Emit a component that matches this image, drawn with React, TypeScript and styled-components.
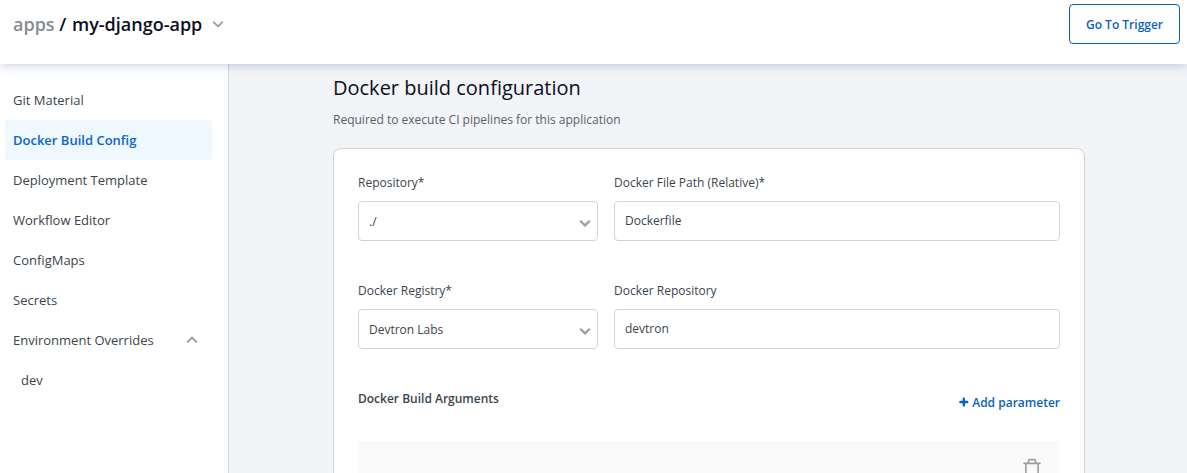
import React from 'react';
import styled, { createGlobalStyle, css } from 'styled-components';

const GlobalStyle = createGlobalStyle`
  *, *::before, *::after { box-sizing: border-box; }
  body {
    margin: 0;
    background: #fff;
    color: #3b444c;
    font-family: "Open Sans", sans-serif;
    font-size: 12px;
    overflow: hidden;
  }
  button, input { font-family: inherit; }
`;

const Page = styled.div`
  height: 100vh;
  display: flex;
  flex-direction: column;
  overflow: hidden;
`;

const Header = styled.header`
  position: relative;
  z-index: 1;
  flex: none;
  height: 64px;
  display: flex;
  justify-content: space-between;
  align-items: flex-start;
  padding: 4px 7px 0 13px;
  background: #fff;
  box-shadow: 0 1px 10px 0 rgba(40, 75, 125, 0.27);
`;

const Breadcrumb = styled.nav`
  display: flex;
  align-items: center;
  height: 39px;
  font-size: 18px;
  font-weight: 600;
  color: #0b0f22;
  white-space: pre;
`;

const CrumbRoot = styled.span`
  color: #858b91;
`;

const CrumbName = styled.span`
  margin-left: 1px;
`;

const CrumbChevron = styled.span`
  display: flex;
  margin-left: 10px;
`;

const OutlineButton = styled.button`
  width: 111px;
  height: 40px;
  padding: 0;
  border: 1px solid #0b5cad;
  border-radius: 4px;
  background: #fff;
  color: #0b62bd;
  font-size: 12px;
  font-weight: 600;
`;

const Body = styled.div`
  flex: 1;
  min-height: 0;
  display: flex;
`;

const Sidebar = styled.aside`
  flex: none;
  width: 229px;
  padding: 16px 16px 0 5px;
  border-right: 1px solid #d0d4d9;
  background: #fff;
`;

const NavItem = styled.a<{ $active?: boolean; $nested?: boolean }>`
  display: flex;
  align-items: center;
  justify-content: space-between;
  height: 40px;
  padding: 0 14px 0 ${(p) => (p.$nested ? 16 : 8)}px;
  border-radius: 4px;
  font-size: 13px;
  ${(p) =>
    p.$active &&
    css`
      background: #eff7ff;
      color: #0b66c3;
      font-weight: 600;
    `}
`;

const NavChevron = styled.span`
  display: flex;
  padding-bottom: 1px;
`;

const Main = styled.main`
  flex: 1;
  min-width: 0;
  padding: 9px 102px 0 104px;
  background: #f2f4f7;
  overflow: hidden;
`;

const Title = styled.h1`
  margin: 0;
  font-size: 20px;
  font-weight: 400;
  line-height: 30px;
  color: #0b0f22;
`;

const Subtitle = styled.p`
  margin: 8px 0 19px;
  font-size: 12px;
  line-height: 18px;
  color: #596168;
`;

const Card = styled.section`
  height: 500px;
  padding: 24px;
  border: 1px solid #d0d4d9;
  border-radius: 8px;
  background: #fff;
`;

const FieldRow = styled.div`
  display: grid;
  grid-template-columns: 240px 1fr;
  column-gap: 16px;
  margin-bottom: 40px;
`;

const Field = styled.div`
  display: flex;
  flex-direction: column;
`;

const Label = styled.label`
  height: 28px;
  line-height: 20px;
`;

const controlFrame = css`
  width: 100%;
  height: 40px;
  border: 1px solid #d0d4d9;
  border-radius: 4px;
  background: #fff;
  color: #3b444c;
  font-size: 12px;
`;

const TextInput = styled.input`
  ${controlFrame}
  padding: 0 10px 2px;
  outline: none;
`;

const SelectBox = styled.div`
  ${controlFrame}
  display: flex;
  align-items: center;
  justify-content: space-between;
  padding: 1px 6px 0 10px;
`;

const SelectChevron = styled.span`
  display: flex;
  padding-top: 2px;
`;

const ArgsHeader = styled.div`
  display: flex;
  justify-content: space-between;
  align-items: flex-start;
  height: 52px;
`;

const ArgsTitle = styled.h2`
  margin: 0;
  font-size: 12px;
  font-weight: 600;
  line-height: 20px;
`;

const AddButton = styled.button`
  display: flex;
  align-items: center;
  gap: 3px;
  height: 18px;
  margin: 4px 0 0;
  padding: 0;
  border: 0;
  background: none;
  color: #0b62bd;
  font-size: 12px;
  font-weight: 600;
`;

const ArgPanel = styled.div`
  display: flex;
  justify-content: flex-end;
  height: 150px;
  padding: 16px 16px 0 0;
  background: #fafafa;
`;

function Chevron({ up = false, stroke = 2 }: { up?: boolean; stroke?: number }) {
  return (
    <svg width="12" height="8" viewBox="0 0 12 8" fill="none" stroke="#999ea3" strokeWidth={stroke}>
      <path d={up ? 'M1.2 6.3 6 1.6 10.8 6.3' : 'M1.2 1.7 6 6.4 10.8 1.7'} />
    </svg>
  );
}

function Plus() {
  return (
    <svg width="11" height="10" viewBox="0 0 11 10" stroke="#0b62bd" strokeWidth="2.4" strokeLinecap="round">
      <path d="M5.8 1.6v6.8M2.4 5h6.8" />
    </svg>
  );
}

function Trash() {
  return (
    <svg width="24" height="24" viewBox="0 0 24 24" fill="none" stroke="#999ea3" strokeWidth="1.6">
      <path d="M3.4 6.4h17.2M8.5 6.4V3.7c0-.7.4-1.1 1.1-1.1h4.8c.7 0 1.1.4 1.1 1.1v2.7M5.9 6.4v14h12.2v-14" />
    </svg>
  );
}

const navItems = ['Git Material', 'Docker Build Config', 'Deployment Template', 'Workflow Editor', 'ConfigMaps', 'Secrets'];

function SelectField({ label, value }: { label: string; value: string }) {
  return (
    <Field>
      <Label>{label}</Label>
      <SelectBox>
        {value}
        <SelectChevron>
          <Chevron stroke={2.2} />
        </SelectChevron>
      </SelectBox>
    </Field>
  );
}

function TextField({ label, value }: { label: string; value: string }) {
  return (
    <Field>
      <Label>{label}</Label>
      <TextInput defaultValue={value} />
    </Field>
  );
}

export default function App() {
  return (
    <Page>
      <GlobalStyle />
      <Header>
        <Breadcrumb>
          <CrumbRoot>apps</CrumbRoot>
          <span> / </span>
          <CrumbName>my-django-app</CrumbName>
          <CrumbChevron>
            <Chevron stroke={1.8} />
          </CrumbChevron>
        </Breadcrumb>
        <OutlineButton>Go To Trigger</OutlineButton>
      </Header>
      <Body>
        <Sidebar>
          {navItems.map((item) => (
            <NavItem key={item} $active={item === 'Docker Build Config'}>
              {item}
            </NavItem>
          ))}
          <NavItem>
            Environment Overrides
            <NavChevron>
              <Chevron up />
            </NavChevron>
          </NavItem>
          <NavItem $nested>dev</NavItem>
        </Sidebar>
        <Main>
          <Title>Docker build configuration</Title>
          <Subtitle>Required to execute CI pipelines for this application</Subtitle>
          <Card>
            <FieldRow>
              <SelectField label="Repository*" value="./" />
              <TextField label="Docker File Path (Relative)*" value="Dockerfile" />
            </FieldRow>
            <FieldRow>
              <SelectField label="Docker Registry*" value="Devtron Labs" />
              <TextField label="Docker Repository" value="devtron" />
            </FieldRow>
            <ArgsHeader>
              <ArgsTitle>Docker Build Arguments</ArgsTitle>
              <AddButton>
                <Plus />
                Add parameter
              </AddButton>
            </ArgsHeader>
            <ArgPanel>
              <Trash />
            </ArgPanel>
          </Card>
        </Main>
      </Body>
    </Page>
  );
}
